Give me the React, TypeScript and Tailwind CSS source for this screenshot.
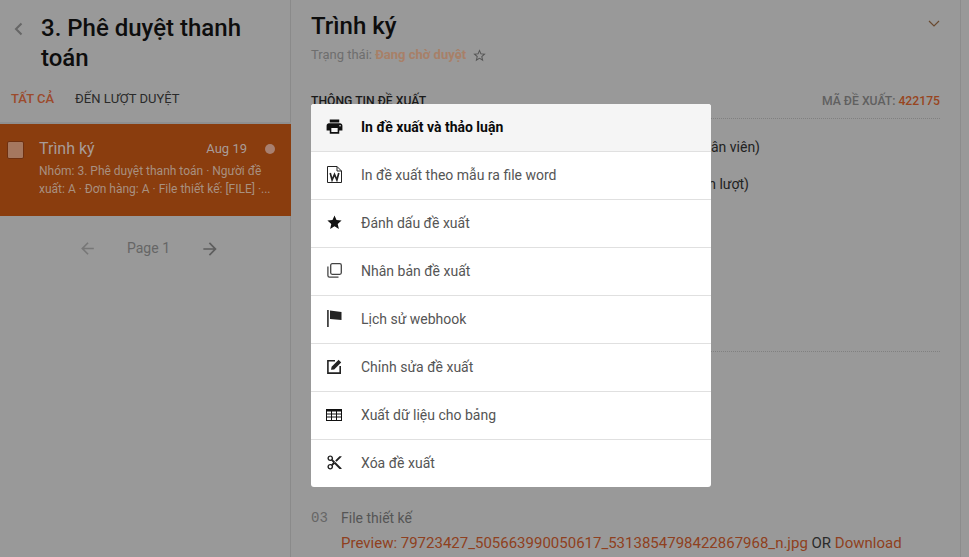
import { MdPrint, MdStar, MdContentCut, MdOutlineStarBorder, MdArrowBack, MdArrowForward } from "react-icons/md";

function WordIcon() {
  return (
    <svg width="15" height="17" viewBox="0 0 15 17" fill="none" stroke="#222" strokeWidth="1">
      <path d="M0.5 0.5h9.5l4.5 4.5v11.5h-14z" />
      <path d="M10 0.5v4.5h4.5" />
      <path d="M3.2 7l1.9 7 2.4-5.5 2.4 5.5 1.9-7" strokeWidth="1.7" />
    </svg>
  );
}

function CopyIcon() {
  return (
    <svg width="15" height="15" viewBox="0 0 15 15" fill="none" stroke="#444" strokeWidth="1.3">
      <rect x="3.7" y="0.7" width="10.6" height="10.6" rx="1.5" />
      <path d="M0.9 3.5v9a1.6 1.6 0 0 0 1.6 1.6h9" />
    </svg>
  );
}

function FlagIcon() {
  return (
    <svg width="15" height="17" viewBox="0 0 15 17" fill="#222">
      <rect x="0" y="0" width="1.8" height="17" fill="#444" />
      <path d="M3 0.5l11.5 1.5v8l-11.5-1z" />
    </svg>
  );
}

function EditIcon() {
  return (
    <svg width="15" height="15" viewBox="0 0 15 15" fill="none">
      <path d="M8 1.8H0.9v12.3h12.3V7" stroke="#222" strokeWidth="1.6" />
      <path d="M4 10.8l.6-3L11.6 0.8l2.6 2.6-7 7z" fill="#222" />
    </svg>
  );
}

function TableIcon() {
  return (
    <svg width="16" height="12" viewBox="0 0 16 12" fill="none" stroke="#111" strokeWidth="1">
      <rect x="0.5" y="0.5" width="15" height="11" />
      <path d="M0.5 1.5h15" strokeWidth="2" />
      <path d="M0.5 5h15M0.5 8h15M5.5 1v10M10.5 1v10" />
    </svg>
  );
}

const menuItems = [
  { label: "In đề xuất và thảo luận", icon: <MdPrint size={19} color="#111" />, active: true },
  { label: "In đề xuất theo mẫu ra file word", icon: <WordIcon /> },
  { label: "Đánh dấu đề xuất", icon: <MdStar size={17} color="#111" /> },
  { label: "Nhân bản đề xuất", icon: <CopyIcon /> },
  { label: "Lịch sử webhook", icon: <FlagIcon /> },
  { label: "Chỉnh sửa đề xuất", icon: <EditIcon /> },
  { label: "Xuất dữ liệu cho bảng", icon: <TableIcon /> },
  { label: "Xóa đề xuất", icon: <MdContentCut size={17} color="#222" /> },
];

function Sidebar() {
  return (
    <aside className="w-[291px] shrink-0 border-r border-[#8a8a8a] h-full">
      <div className="flex pl-[14px] pt-[13px]">
        <svg width="9" height="14" viewBox="0 0 9 14" fill="none" stroke="#666" strokeWidth="2" className="mt-[9px] shrink-0">
          <path d="M7.5 1.5L2 7l5.5 5.5" />
        </svg>
        <h1 className="ml-[18px] text-[24px] leading-[30px] font-medium text-[#0d0d0d] w-[230px]">
          3. Phê duyệt thanh toán
        </h1>
      </div>
      <div className="flex items-center gap-[21px] pl-[11px] mt-[14px] h-[24px] text-[13px]">
        <span className="font-medium text-[#9c4a2c]">TẤT CẢ</span>
        <span className="text-[#2a2a2a]">ĐẾN LƯỢT DUYỆT</span>
      </div>
      <div className="mt-[11px] -mr-[1px] border-t-2 border-[#8f8f8f] h-[94px] bg-[#8a3d0e] flex pl-[7px] pt-[17px]">
        <span className="w-[17px] h-[18px] bg-[#a5775f] border border-[#6f3010] rounded-[2px] shrink-0" />
        <div className="ml-[15px] flex-1 pr-[16px]">
          <div className="flex items-center h-[16px]">
            <span className="text-[16px] leading-[20px] text-[#a89c98]">Trình ký</span>
            <span className="ml-auto text-[13px] text-[#a89c98] mr-[18px]">Aug 19</span>
            <span className="w-[10px] h-[10px] rounded-full bg-[#a88070]" />
          </div>
          <p className="mt-[5px] text-[12px] leading-[18px] text-[#a89080] w-[232px] h-[36px] overflow-hidden">
            Nhóm: 3. Phê duyệt thanh toán · Người đề xuất: A · Đơn hàng: A · File thiết kế: [FILE] ·...
          </p>
        </div>
      </div>
      <div className="flex items-center pl-[78px] mt-[22px] text-[14px] text-[#666]">
        <MdArrowBack size={19} color="#777" />
        <span className="ml-[30px]">Page 1</span>
        <MdArrowForward size={20} color="#5e5e5e" className="ml-[30px]" />
      </div>
    </aside>
  );
}

function Detail() {
  return (
    <main className="w-[670px] shrink-0 h-full border-r border-[#8c8c8c] pl-[20px] pr-[20px] pt-[11px]">
      <div className="flex items-start">
        <h2 className="text-[24px] leading-[30px] font-medium text-[#0d0d0d]">Trình ký</h2>
        <svg width="12" height="7" viewBox="0 0 12 7" fill="none" stroke="#6a4a30" strokeWidth="1.2" className="ml-auto mt-[9px]">
          <path d="M1 1l5 5 5-5" />
        </svg>
      </div>
      <div className="flex items-center mt-[4px] text-[13px] leading-[20px]">
        <span className="text-[#6e6e6e]">Trạng thái:&nbsp;</span>
        <span className="font-bold text-[#a88068]">Đang chờ duyệt</span>
        <MdOutlineStarBorder size={15} color="#555" className="ml-[6px]" />
      </div>
      <div className="flex items-center justify-between mt-[27px] pb-[8px] border-b border-dotted border-[#808080] text-[12.2px] leading-[18px] font-medium">
        <span className="text-[#1a1a1a]">THÔNG TIN ĐỀ XUẤT</span>
        <span className="text-[#606060]">
          MÃ ĐỀ XUẤT: <span className="text-[#984520]">422175</span>
        </span>
      </div>
      <div className="mt-[18px] w-[449px] text-right text-[14px] leading-[20px] text-[#222]">Người đề xuất (nhân viên)</div>
      <div className="mt-[17px] w-[438px] text-right text-[14px] leading-[20px] text-[#222]">Người duyệt (lần lượt)</div>
      <div className="mt-[157px] border-b border-dotted border-[#808080]" />
      <div className="mt-[156px] flex items-start text-[14px] leading-[20px]">
        <span className="w-[30px] font-['Liberation_Mono',monospace] text-[#666]">03</span>
        <div>
          <div className="text-[#555]">File thiết kế</div>
          <div className="mt-[5px] whitespace-nowrap text-[15px] text-[#8f4020]">
            Preview: 79723427_505663990050617_5313854798422867968_n.jpg <span className="text-[#2b2b2b]">OR</span> Download
          </div>
        </div>
      </div>
    </main>
  );
}

export default function App() {
  return (
    <div className="relative w-[969px] h-[557px] overflow-hidden bg-[#999999] font-['Roboto',sans-serif]">
      <div className="flex h-full">
        <Sidebar />
        <Detail />
      </div>
      <div className="absolute left-[311px] top-[104px] w-[400px] bg-white rounded-[3px] overflow-hidden">
        {menuItems.map((item, i) => (
          <div
            key={item.label}
            className={`flex items-center text-[14px] ${i < menuItems.length - 1 ? "h-[48px] border-b border-[#e0e0e0]" : "h-[47px]"} ${item.active ? "bg-[#f5f5f5] font-bold text-[#0a0a0a]" : "text-[#555]"}`}
          >
            <span className="w-[50px] flex justify-center shrink-0 -translate-x-[2px] -translate-y-[1px]">{item.icon}</span>
            {item.label}
          </div>
        ))}
      </div>
    </div>
  );
}
